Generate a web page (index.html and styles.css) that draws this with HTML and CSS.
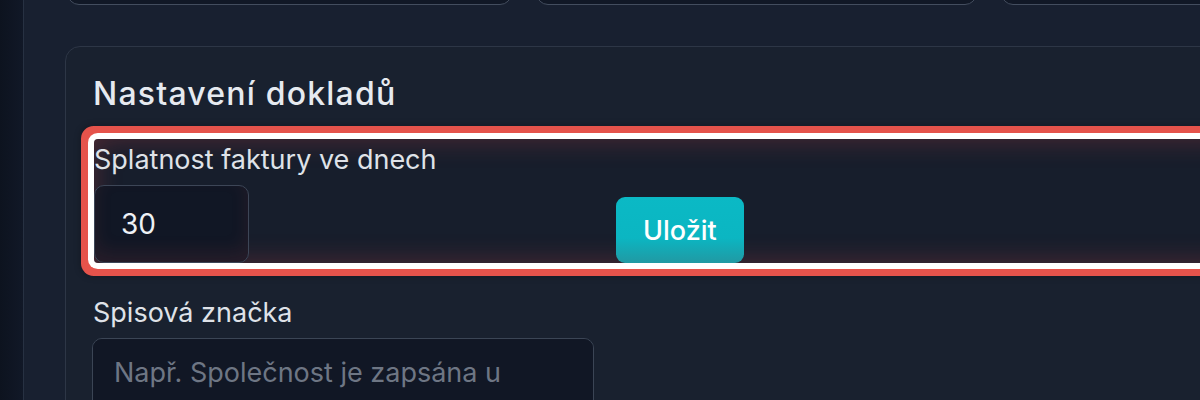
FILE: index.html
```html
<!DOCTYPE html>
<html lang="cs">
<head>
<meta charset="utf-8">
<title>Nastavení dokladů</title>
<link rel="stylesheet" href="styles.css">
</head>
<body>
<div class="app">
  <aside class="sidebar"></aside>
  <main class="main">
    <div class="cards">
      <div class="card"></div>
      <div class="card"></div>
      <div class="card"></div>
    </div>
    <section class="panel">
      <h2 class="panel-title">Nastavení dokladů</h2>
      <div class="row highlighted">
        <div class="field">
          <label class="label" for="due">Splatnost faktury ve dnech</label>
          <input id="due" class="input" type="text" value="30">
        </div>
        <button class="btn" type="button">Uložit</button>
      </div>
      <div class="field field-spaced">
        <label class="label" for="reg">Spisová značka</label>
        <textarea id="reg" class="textarea" placeholder="Např. Společnost je zapsána u soudu v Praze, oddíl C, vložka 12345"></textarea>
      </div>
    </section>
  </main>
</div>
</body>
</html>
```
FILE: styles.css
```css
html, body {
  margin: 0;
  padding: 0;
  height: 400px;
  overflow: hidden;
  background: #0f1522;
  font-family: Inter, "Noto Sans", sans-serif;
}

.app {
  display: flex;
  height: 400px;
}

.sidebar {
  width: 23px;
  flex: 0 0 23px;
  background: linear-gradient(90deg, #0d131f, #111827);
  border-right: 1px solid #273142;
}

.main {
  flex: 1;
  background: #182030;
  padding: 0 0 0 41px;
  overflow: hidden;
}

.cards {
  display: grid;
  grid-template-columns: 445px 441px 445px;
  gap: 24px;
  margin: -95px 0 0 2px;
}

.card {
  height: 100px;
  background: #111826;
  border: 1px solid #434d5e;
  border-radius: 12px;
  box-sizing: border-box;
}

.panel {
  margin-top: 41px;
  width: 1300px;
  height: 600px;
  box-sizing: border-box;
  padding: 27px 27px;
  background: #19212f;
  border: 1px solid #2d3646;
  border-radius: 15px;
}

.panel-title {
  margin: 0 0 25px 0;
  font-size: 32px;
  line-height: 40px;
  font-weight: 500;
  letter-spacing: 1.2px;
  color: #e6eaf0;
}

.row {
  display: flex;
  align-items: flex-end;
  gap: 20px;
  margin-left: 1px;
}

.highlighted {
  border-radius: 4px;
  background: #171e2c;
  box-shadow:
    0 0 0 6px #ffffff,
    0 0 0 13px #e5534b,
    0 0 6px 14px rgba(0, 0, 0, 0.22),
    inset 0 0 28px rgba(220, 70, 70, 0.3);
}

.field {
  width: 502px;
  display: flex;
  flex-direction: column;
}

.field-spaced {
  margin-top: 29px;
}

.label {
  display: block;
  font-size: 27px;
  line-height: 42px;
  margin-bottom: 4px;
  color: #dfe2e8;
}

.input {
  width: 155px;
  height: 78px;
  box-sizing: border-box;
  padding: 0 0 0 26px;
  background: #111725;
  border: 1px solid #3d4657;
  border-radius: 10px;
  color: #eef1f5;
  font-family: inherit;
  font-size: 28px;
  outline: none;
  box-shadow: inset 0 -10px 18px rgba(200, 70, 70, 0.12);
}

.btn {
  height: 66px;
  padding: 0 27px;
  border: none;
  border-radius: 9px;
  background: linear-gradient(180deg, #0bb9c5 0%, #0bb6c2 62%, #2199a3 100%);
  color: #ffffff;
  font-family: inherit;
  font-size: 27px;
  font-weight: 500;
  cursor: pointer;
}

.textarea {
  width: 502px;
  height: 130px;
  box-sizing: border-box;
  padding: 14px 21px;
  margin-left: -1px;
  background: #111725;
  border: 1px solid #3b4555;
  border-radius: 10px;
  color: #e6eaf0;
  font-family: inherit;
  font-size: 27px;
  line-height: 40px;
  resize: none;
  outline: none;
}

.textarea::placeholder {
  color: #6e7684;
}
```
